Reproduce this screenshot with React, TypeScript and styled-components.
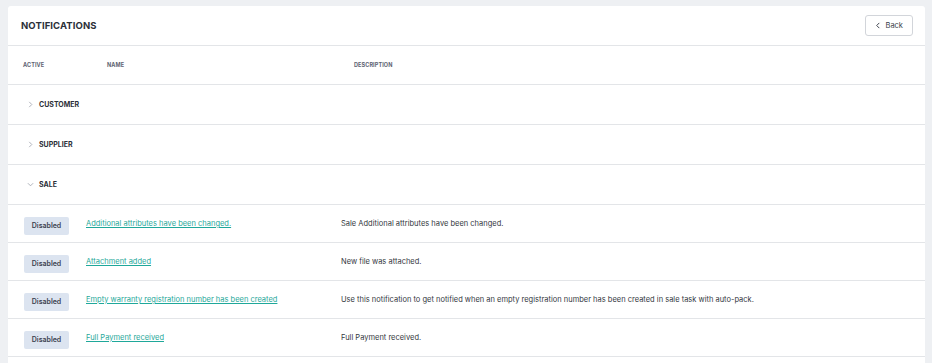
import React, { useState } from 'react'
import styled, { createGlobalStyle } from 'styled-components'

type Notification = {
  name: string
  description: string
  active: boolean
}

type Group = {
  id: string
  label: string
  items: Notification[]
}

const groups: Group[] = [
  { id: 'customer', label: 'CUSTOMER', items: [] },
  { id: 'supplier', label: 'SUPPLIER', items: [] },
  {
    id: 'sale',
    label: 'SALE',
    items: [
      {
        name: 'Additional attributes have been changed.',
        description: 'Sale Additional attributes have been changed.',
        active: false,
      },
      { name: 'Attachment added', description: 'New file was attached.', active: false },
      {
        name: 'Empty warranty registration number has been created',
        description:
          'Use this notification to get notified when an empty registration number has been created in sale task with auto-pack.',
        active: false,
      },
      { name: 'Full Payment received', description: 'Full Payment received.', active: false },
    ],
  },
]

const GlobalStyle = createGlobalStyle`
  html, body {
    margin: 0;
    padding: 0;
    background: #eef0f3;
  }
  body {
    font-family: Inter, "Noto Sans", sans-serif;
    color: #2b2f38;
  }
`

export default function App() {
  const [open, setOpen] = useState<Record<string, boolean>>({ sale: true })

  const toggle = (id: string) => setOpen((prev) => ({ ...prev, [id]: !prev[id] }))

  return (
    <>
      <GlobalStyle />
      <Page>
        <Card>
          <Header>
            <Title>NOTIFICATIONS</Title>
            <BackButton>
              <svg width="6" height="7" viewBox="0 0 6 8" fill="none">
                <path d="M4.5 1 L1.5 4 L4.5 7" stroke="#3a3f4a" strokeWidth="1.1" />
              </svg>
              Back
            </BackButton>
          </Header>

          <ColumnRow>
            <ColumnLabel>ACTIVE</ColumnLabel>
            <ColumnLabel>NAME</ColumnLabel>
            <ColumnLabel>DESCRIPTION</ColumnLabel>
          </ColumnRow>

          {groups.map((group) => (
            <React.Fragment key={group.id}>
              <GroupRow onClick={() => toggle(group.id)}>
                <Chevron open={!!open[group.id]} width="7" height="7" viewBox="0 0 8 8" fill="none">
                  <path d="M2.5 1 L5.5 4 L2.5 7" stroke="#9aa0aa" strokeWidth="0.9" />
                </Chevron>
                <GroupLabel>{group.label}</GroupLabel>
              </GroupRow>
              {open[group.id] &&
                group.items.map((item) => (
                  <ItemRow key={item.name}>
                    <div>
                      <StatusBadge>{item.active ? 'Enabled' : 'Disabled'}</StatusBadge>
                    </div>
                    <NameLink href="#">{item.name}</NameLink>
                    <Description>{item.description}</Description>
                  </ItemRow>
                ))}
            </React.Fragment>
          ))}
        </Card>
      </Page>
    </>
  )
}

const Page = styled.div`
  padding: 6px 7px 0 8px;
  height: 363px;
  box-sizing: border-box;
  overflow: hidden;
`

const Card = styled.div`
  background: #ffffff;
  border-radius: 3px 3px 0 0;
  min-height: 400px;
`

const Header = styled.div`
  display: flex;
  align-items: center;
  justify-content: space-between;
  height: 40px;
  padding: 0 12px 0 13px;
  border-bottom: 1px solid #e3e5e8;
  box-sizing: border-box;
`

const Title = styled.h1`
  margin: 0;
  font-size: 9.5px;
  font-weight: 700;
  color: #2b2f38;
  letter-spacing: 0.1px;
`

const BackButton = styled.button`
  display: flex;
  align-items: center;
  gap: 4px;
  height: 21px;
  padding: 0 9px 0 9px;
  border: 1px solid #d2d5da;
  border-radius: 3px;
  background: #fff;
  font-family: Inter, "Noto Sans", sans-serif;
  font-size: 7.5px;
  color: #3a3f4a;
  cursor: pointer;
`

const ColumnRow = styled.div`
  display: grid;
  grid-template-columns: 84px 247px 1fr;
  align-items: center;
  height: 39px;
  padding-left: 15px;
  border-bottom: 1px solid #e3e5e8;
  box-sizing: border-box;
`

const ColumnLabel = styled.span`
  font-size: 5.5px;
  font-weight: 700;
  color: #5d6372;
  letter-spacing: 0.1px;
`

const GroupRow = styled.div`
  display: flex;
  align-items: center;
  gap: 5px;
  height: 40px;
  padding-left: 19px;
  border-bottom: 1px solid #e3e5e8;
  box-sizing: border-box;
  cursor: pointer;
`

const Chevron = styled.svg<{ open: boolean }>`
  transform: rotate(${(p) => (p.open ? '90deg' : '0deg')});
`

const GroupLabel = styled.span`
  font-size: 7px;
  font-weight: 700;
  color: #2b2f38;
`

const ItemRow = styled.div`
  display: grid;
  grid-template-columns: 62px 255px 1fr;
  align-items: center;
  height: 38px;
  padding-left: 16px;
  border-bottom: 1px solid #e3e5e8;
  box-sizing: border-box;
`

const StatusBadge = styled.span`
  display: inline-flex;
  align-items: center;
  justify-content: center;
  width: 45px;
  height: 18px;
  border-radius: 2px;
  background: #dce4f0;
  font-size: 7px;
  font-weight: 600;
  color: #3c4250;
`

const NameLink = styled.a`
  font-size: 7.5px;
  color: #1fa89a;
  text-decoration: underline;
  text-underline-offset: 1px;
  white-space: nowrap;
`

const Description = styled.span`
  font-size: 7.5px;
  color: #333740;
  white-space: nowrap;
`
